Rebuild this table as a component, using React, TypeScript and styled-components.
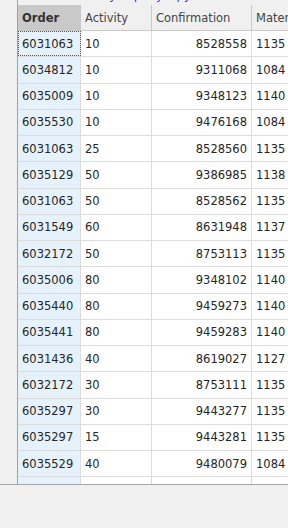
import styled, { createGlobalStyle, css } from "styled-components";

const GlobalStyle = createGlobalStyle`
  html, body {
    margin: 0;
    padding: 0;
    background: #f0f0f0;
  }
`;

const Page = styled.div`
  width: 288px;
  height: 528px;
  overflow: hidden;
  display: flex;
  flex-direction: column;
  background: #f0f0f0;
  font-family: "DejaVu Sans", Verdana, sans-serif;
  font-size: 11.5px;
  color: #262626;
`;

const GridArea = styled.div`
  display: flex;
  height: 484px;
  border-bottom: 1px solid #a8a8a8;
`;

const Gutter = styled.div`
  width: 17px;
  flex-shrink: 0;
  border-right: 1px solid #a0a0a0;
  background: #f0f0f0;
`;

const TableWrap = styled.div`
  flex: 1;
  overflow: hidden;
  display: flex;
  flex-direction: column;
`;

// descenders of a link line that scrolled out above the grid
const TopStrip = styled.div`
  height: 5px;
  overflow: hidden;
  color: #2a2af0;
  white-space: nowrap;
  line-height: 14px;
`;

const TopText = styled.div`
  margin-top: -12px;
  padding-left: 84px;
  word-spacing: 10px;
`;

const cols = "63px 71px 100px 60px";

const HeaderRow = styled.div`
  display: grid;
  grid-template-columns: ${cols};
  height: 26px;
  border-bottom: 1px solid #c8c8c8;
  box-sizing: border-box;
`;

const HeadCell = styled.div<{ $active?: boolean }>`
  display: flex;
  align-items: center;
  padding: 0 4px;
  border-right: 1px solid #c8c8c8;
  background: #f0f0f0;
  color: #444;
  white-space: nowrap;
  ${(p) =>
    p.$active &&
    css`
      background: #c9c9c9;
      font-weight: bold;
      color: #333;
    `}
`;

const Body = styled.div`
  flex: 1;
  overflow: hidden;
  background: #ffffff;
`;

const Row = styled.div`
  display: grid;
  grid-template-columns: ${cols};
  height: 26.25px;
  box-sizing: border-box;
  border-bottom: 1px solid #dcdcdc;
`;

const Cell = styled.div<{ $key?: boolean; $right?: boolean; $focus?: boolean }>`
  display: flex;
  align-items: center;
  justify-content: ${(p) => (p.$right ? "flex-end" : "flex-start")};
  padding: 0 4px;
  border-right: 1px solid #dcdcdc;
  white-space: nowrap;
  box-sizing: border-box;
  background: ${(p) => (p.$key ? "#e5f1fb" : "#ffffff")};
  ${(p) =>
    p.$focus &&
    css`
      outline: 1px dotted #555;
      outline-offset: -1px;
    `}
`;

const Footer = styled.div`
  flex: 1;
  background: #f0f0f0;
`;

const rows: [string, string, string, string][] = [
  ["6031063", "10", "8528558", "1135"],
  ["6034812", "10", "9311068", "1084"],
  ["6035009", "10", "9348123", "1140"],
  ["6035530", "10", "9476168", "1084"],
  ["6031063", "25", "8528560", "1135"],
  ["6035129", "50", "9386985", "1138"],
  ["6031063", "50", "8528562", "1135"],
  ["6031549", "60", "8631948", "1137"],
  ["6032172", "50", "8753113", "1135"],
  ["6035006", "80", "9348102", "1140"],
  ["6035440", "80", "9459273", "1140"],
  ["6035441", "80", "9459283", "1140"],
  ["6031436", "40", "8619027", "1127"],
  ["6032172", "30", "8753111", "1135"],
  ["6035297", "30", "9443277", "1135"],
  ["6035297", "15", "9443281", "1135"],
  ["6035529", "40", "9480079", "1084"],
  ["", "", "", ""],
];

export default function App() {
  return (
    <Page>
      <GlobalStyle />
      <GridArea>
        <Gutter />
        <TableWrap>
          <TopStrip>
            <TopText>by query py</TopText>
          </TopStrip>
          <HeaderRow>
            <HeadCell $active>Order</HeadCell>
            <HeadCell>Activity</HeadCell>
            <HeadCell>Confirmation</HeadCell>
            <HeadCell>Material</HeadCell>
          </HeaderRow>
          <Body>
            {rows.map((r, i) => (
              <Row key={i}>
                <Cell $key $focus={i === 0}>
                  {r[0]}
                </Cell>
                <Cell>{r[1]}</Cell>
                <Cell $right>{r[2]}</Cell>
                <Cell>{r[3]}</Cell>
              </Row>
            ))}
          </Body>
        </TableWrap>
      </GridArea>
      <Footer />
    </Page>
  );
}
